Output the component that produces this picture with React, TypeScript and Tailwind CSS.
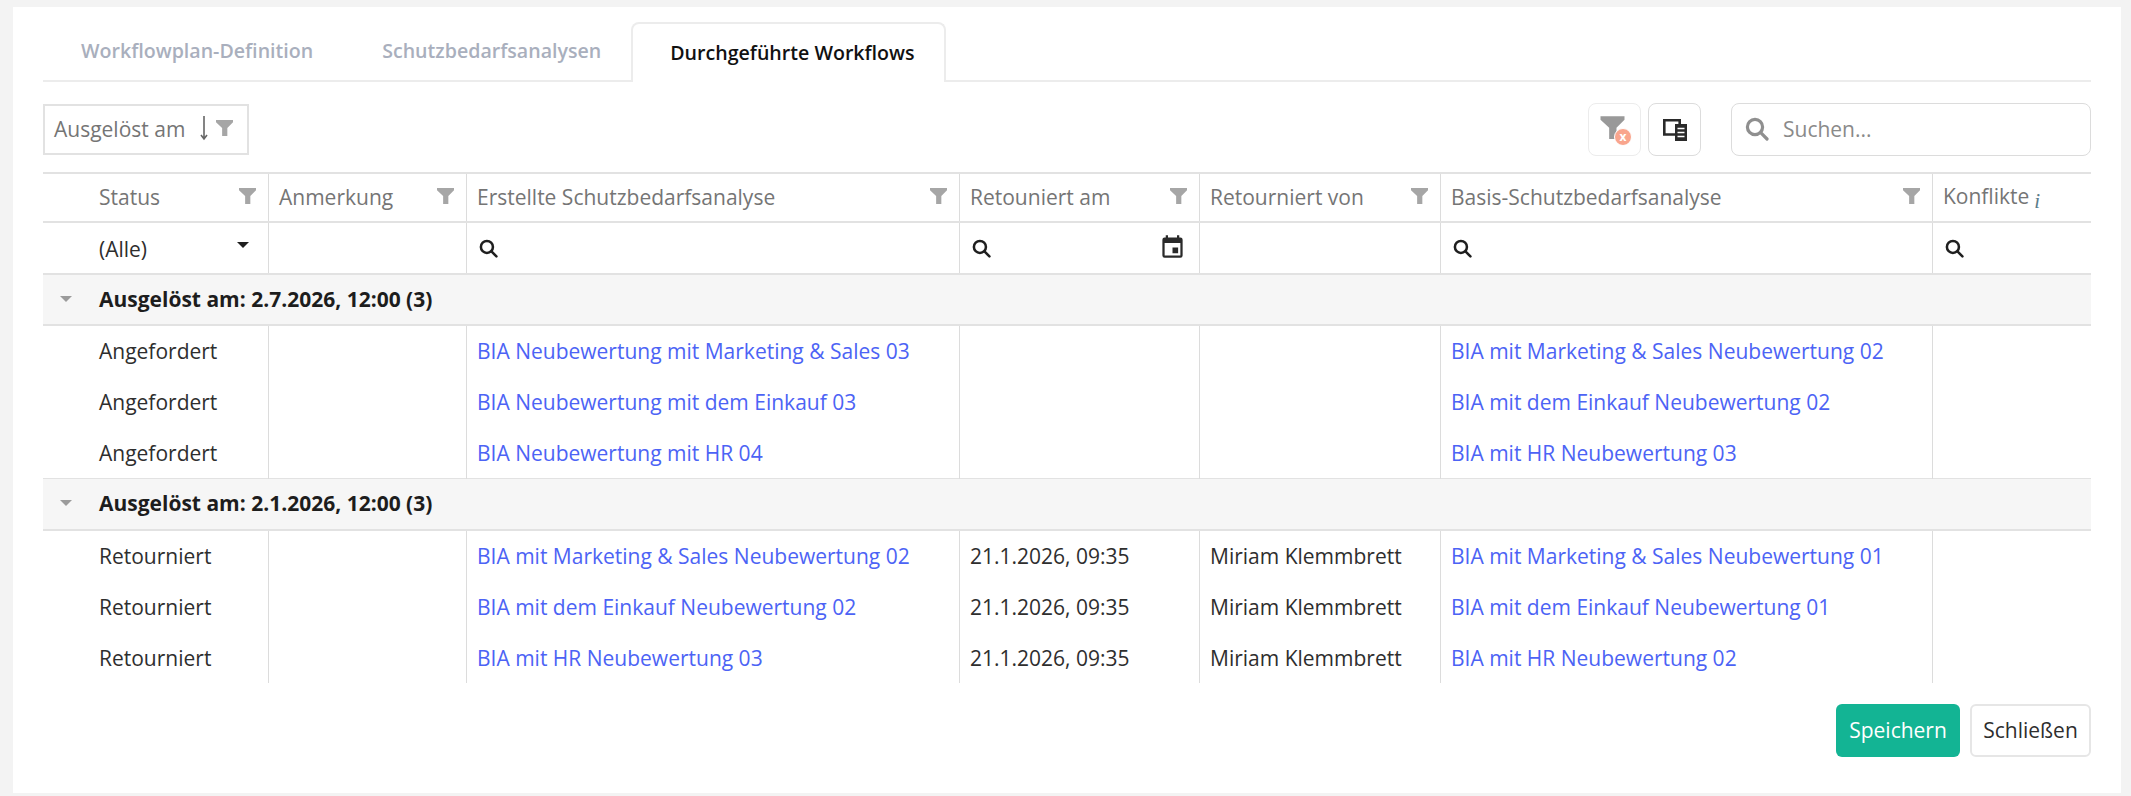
import React from 'react';

const colClasses = 'grid grid-cols-[225px_198px_493px_240px_241px_492px_159px]';

function Funnel({ className, color = '#a6a6a6' }: { className?: string; color?: string }) {
  return (
    <svg viewBox="0 0 18 18" className={className} fill={color}>
      <path d="M0 1h18v2.500L12 9.500V18H6.500V9.500L0 3.500z" />
    </svg>
  );
}

function SearchIcon({ className, color = '#1f1f1f' }: { className?: string; color?: string }) {
  return (
    <svg viewBox="0 0 18 18" className={className} fill="none" stroke={color} strokeWidth="2.400" strokeLinecap="round">
      <circle cx="7.500" cy="7.500" r="5.700" />
      <path d="M11.800 11.800L16.500 16.500" />
    </svg>
  );
}

function HeaderCell({ label, first, filter = true, info }: { label: string; first?: boolean; filter?: boolean; info?: boolean }) {
  return (
    <div className={`flex items-center justify-between h-full pr-[12px] ${first ? 'pl-[56px]' : 'pl-[10px] border-l border-[#dcdcdc]'}`}>
      <span className="text-[#757575] whitespace-nowrap">
        {label}
        {info && <i className="inline-block ml-[5px] translate-y-[4px] text-[21px] text-[#5c7c8a] font-['Liberation_Serif',serif]">i</i>}
      </span>
      {filter && <Funnel className="w-[17px] h-[17px] -mt-[5px] shrink-0" />}
    </div>
  );
}

function FilterCell({ children, first }: { children?: React.ReactNode; first?: boolean }) {
  return (
    <div className={`flex items-center justify-between h-full ${first ? 'pl-[56px] pr-[19px]' : 'pl-[12px] pr-[15px] border-l border-[#dcdcdc]'}`}>
      {children}
    </div>
  );
}

function GroupRow({ label, first }: { label: string; first?: boolean }) {
  return (
    <div className={`flex items-center -mt-[1px] bg-[#f6f6f6] border-t border-b-2 border-[#e2e2e2] ${first ? 'h-[52px]' : 'h-[53px]'}`}>
      <div className="w-[56px] flex justify-center pr-[10px]">
        <div className="w-0 h-0 border-x-[6px] border-x-transparent border-t-[6px] border-t-[#9b9b9b] -mt-[2px]" />
      </div>
      <span className="font-bold text-[#1d1d1d]">{label}</span>
    </div>
  );
}

function DataRow({ status, created, date, by, base }: { status: string; created: string; date?: string; by?: string; base: string }) {
  const cell = 'flex items-center pl-[10px] border-l border-[#dcdcdc] whitespace-nowrap';
  return (
    <div className={`${colClasses} h-[51px] text-[#2e2e2e]`}>
      <div className="flex items-center pl-[56px]">{status}</div>
      <div className={cell} />
      <div className={`${cell} text-[#4c63f5]`}>{created}</div>
      <div className={cell}>{date}</div>
      <div className={cell}>{by}</div>
      <div className={`${cell} text-[#4c63f5]`}>{base}</div>
      <div className={cell} />
    </div>
  );
}

export default function App() {
  return (
    <div className="h-[796px] w-[2131px] bg-[#f3f3f3] pt-[7px] pl-[13px] pr-[10px] pb-[3px] font-['Open_Sans',sans-serif] text-[21px] overflow-hidden">
      <div className="h-full bg-white px-[30px] pt-[15px]">
        {/* tabs */}
        <div className="flex h-[60px] border-b-2 border-[#ececec] w-[2048px] font-semibold text-[19.600px]">
          <div className="flex items-center pl-[38px] pr-[31px] text-[#a9afbd] whitespace-nowrap">Workflowplan-Definition</div>
          <div className="flex items-center pl-[38px] pr-[30px] text-[#a9afbd] whitespace-nowrap">Schutzbedarfsanalysen</div>
          <div className="flex items-center pl-[37px] pr-[29px] h-[60px] border-2 border-b-0 border-[#ececec] rounded-t-[8px] bg-white text-[#111] whitespace-nowrap">Durchgeführte Workflows</div>
        </div>

        {/* toolbar */}
        <div className="flex items-start h-[90px] pt-[21px] w-[2048px]">
          <div className="flex items-center h-[51px] w-[206px] mt-[1px] border-2 border-[#e2e2e2] pl-[9px] text-[#757575]">
            <span>Ausgelöst am</span>
            <svg viewBox="0 0 10 26" className="w-[10px] h-[26px] ml-[14px] -mt-[3px]" fill="none" stroke="#666" strokeWidth="1.600">
              <path d="M5 1v23M2 20l3 4 3-4" />
            </svg>
            <Funnel className="w-[17px] h-[17px] ml-[7px] -mt-[4px]" />
          </div>
          <div className="flex-1" />
          <div className="flex items-center justify-center w-[53px] h-[53px] border border-[#ececec] rounded-[8px]">
            <div className="relative w-[33px] h-[31px] pt-[1px]">
              <Funnel className="w-[29px] h-[24px]" color="#999" />
              <div className="absolute right-[-1px] bottom-[-1px] flex items-center justify-center w-[18px] h-[18px] rounded-full bg-[#f9a58d] border border-white text-white text-[12px] font-bold leading-none">x</div>
            </div>
          </div>
          <div className="flex items-center justify-center w-[53px] h-[53px] ml-[7px] border border-[#dcdcdc] rounded-[8px]">
            <svg viewBox="0 0 24 22" className="w-[24px] h-[22px]" fill="none">
              <path d="M13 15.500H1.300V1.300h15.400V5" stroke="#2a2a2a" strokeWidth="2.600" />
              <rect x="12" y="5" width="12" height="17" fill="#2a2a2a" />
              <path d="M14.500 9.500h7M14.500 13.500h7M14.500 17.500h7" stroke="#fff" strokeWidth="1.500" />
            </svg>
          </div>
          <div className="flex items-center w-[360px] h-[53px] ml-[30px] border border-[#dcdcdc] rounded-[8px] pl-[13px]">
            <SearchIcon className="w-[24px] h-[24px] -mt-[2px]" color="#8f8f8f" />
            <span className="ml-[14px] text-[#8a8a8a]">Suchen...</span>
          </div>
        </div>

        {/* table */}
        <div className="w-[2048px] h-[511px] overflow-hidden border-t-2 border-[#e2e2e2]">
          <div className={`${colClasses} h-[49px] border-b-2 border-[#e2e2e2]`}>
            <HeaderCell label="Status" first />
            <HeaderCell label="Anmerkung" />
            <HeaderCell label="Erstellte Schutzbedarfsanalyse" />
            <HeaderCell label="Retouniert am" />
            <HeaderCell label="Retourniert von" />
            <HeaderCell label="Basis-Schutzbedarfsanalyse" />
            <HeaderCell label="Konflikte" filter={false} info />
          </div>
          <div className={`${colClasses} h-[52px] border-b-2 border-[#e2e2e2] text-[#2e2e2e]`}>
            <FilterCell first>
              <span className="mt-[3px]">(Alle)</span>
              <div className="w-0 h-0 border-x-[6px] border-x-transparent border-t-[6px] border-t-[#1f1f1f] -mt-[6px]" />
            </FilterCell>
            <FilterCell />
            <FilterCell><SearchIcon className="w-[19px] h-[19px] mt-[1px]" /></FilterCell>
            <FilterCell>
              <SearchIcon className="w-[19px] h-[19px] mt-[1px]" />
              <svg viewBox="0 0 24 24" className="w-[27px] h-[27px] -mt-[1px] mr-[-2px]" fill="#2a2a2a">
                <path d="M17 12h-5v5h5v-5zM16 1v2H8V1H6v2H5a2 2 0 0 0-2 2v14a2 2 0 0 0 2 2h14a2 2 0 0 0 2-2V5a2 2 0 0 0-2-2h-1V1h-2zm3 18H5V8h14v11z" />
              </svg>
            </FilterCell>
            <FilterCell />
            <FilterCell><SearchIcon className="w-[19px] h-[19px] mt-[1px]" /></FilterCell>
            <FilterCell><SearchIcon className="w-[19px] h-[19px] mt-[1px]" /></FilterCell>
          </div>
          <GroupRow first label="Ausgelöst am: 2.7.2026, 12:00 (3)" />
          <DataRow status="Angefordert" created="BIA Neubewertung mit Marketing & Sales 03" base="BIA mit Marketing & Sales Neubewertung 02" />
          <DataRow status="Angefordert" created="BIA Neubewertung mit dem Einkauf 03" base="BIA mit dem Einkauf Neubewertung 02" />
          <DataRow status="Angefordert" created="BIA Neubewertung mit HR 04" base="BIA mit HR Neubewertung 03" />
          <GroupRow label="Ausgelöst am: 2.1.2026, 12:00 (3)" />
          <DataRow status="Retourniert" created="BIA mit Marketing & Sales Neubewertung 02" date="21.1.2026, 09:35" by="Miriam Klemmbrett" base="BIA mit Marketing & Sales Neubewertung 01" />
          <DataRow status="Retourniert" created="BIA mit dem Einkauf Neubewertung 02" date="21.1.2026, 09:35" by="Miriam Klemmbrett" base="BIA mit dem Einkauf Neubewertung 01" />
          <DataRow status="Retourniert" created="BIA mit HR Neubewertung 03" date="21.1.2026, 09:35" by="Miriam Klemmbrett" base="BIA mit HR Neubewertung 02" />
        </div>

        {/* footer */}
        <div className="flex justify-end gap-[10px] w-[2048px] mt-[21px]">
          <button className="w-[124px] h-[53px] bg-[#13b494] text-white rounded-[6px]">Speichern</button>
          <button className="w-[121px] h-[53px] bg-white border-2 border-[#e6e6e6] rounded-[6px] text-[#2e2e2e]">Schließen</button>
        </div>
      </div>
    </div>
  );
}
